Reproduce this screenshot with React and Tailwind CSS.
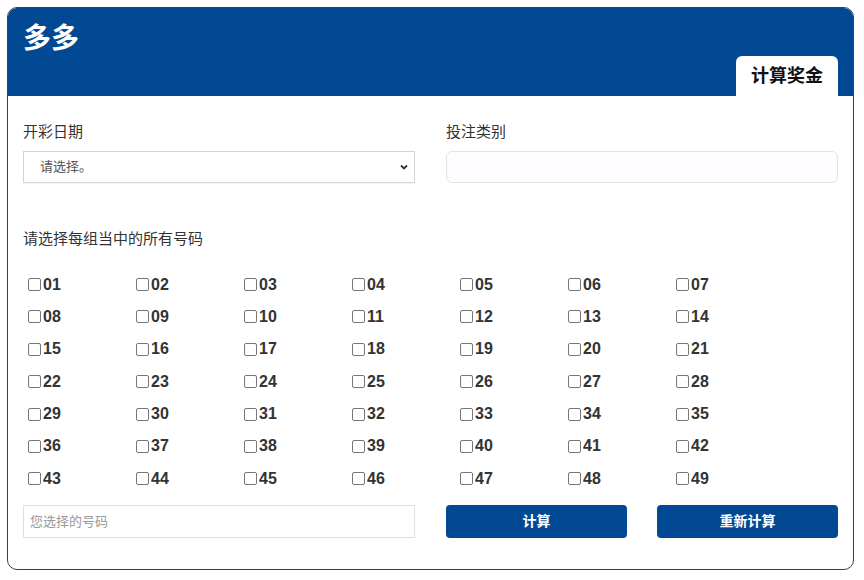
import React from "react";

const nums = Array.from({ length: 49 }, (_, i) => String(i + 1).padStart(2, "0"));

export default function App() {
  return (
    <div className="bg-white w-[864px] h-[580px] p-[7px] font-['Liberation_Sans','Noto_Sans_CJK_SC',sans-serif]">
      <div className="w-[847px] h-[563px] border border-[#3a3f4a] rounded-[10px] overflow-hidden bg-white">
        {/* header */}
        <div className="h-[88px] bg-[#014a93] flex justify-between items-end pl-[15px] pr-[15px]">
          <h1 className="self-start mt-[13px] text-[28px] leading-[36px] font-bold text-white">多多</h1>
          <div className="w-[102px] h-[40px] bg-white rounded-t-[6px] flex items-center justify-center text-[18px] font-bold text-[#111]">
            计算奖金
          </div>
        </div>

        <div className="px-[15px] pt-[25px]">
          <div className="grid grid-cols-2 gap-x-[31px]">
            <div>
              <div className="text-[15px] leading-[22px] text-[#333] mb-[8px]">开彩日期</div>
              <div className="h-[32px] border border-[#d4d4d8] shadow-[0_1px_1px_rgba(0,0,0,0.04)] flex items-center justify-between pl-[16px] pr-[4px] text-[13px] text-[#555]">
                <span>请选择。</span>
                <svg width="12" height="12" viewBox="0 0 12 12" fill="none" stroke="#333" strokeWidth="1.8">
                  <path d="M3 4.5l3 3 3-3" />
                </svg>
              </div>
            </div>
            <div>
              <div className="text-[15px] leading-[22px] text-[#333] mb-[8px]">投注类别</div>
              <div className="h-[32px] border border-[#e2e2e6] rounded-[6px] bg-[#fdfcfe]"></div>
            </div>
          </div>

          <div className="mt-[45px] text-[15px] leading-[22px] text-[#333]">请选择每组当中的所有号码</div>

          <div className="mt-[24px] grid grid-cols-[repeat(7,108px)] gap-y-[11.4px]">
            {nums.map((n) => (
              <label key={n} className="flex items-center h-[21px] text-[16px] font-bold text-[#333]">
                <span className="ml-[5px] mr-[2px] w-[13px] h-[13px] border border-[#777] rounded-[2px] bg-white"></span>
                {n}
              </label>
            ))}
          </div>

          <div className="mt-[16px] grid grid-cols-2 gap-x-[31px]">
            <div className="h-[33px] border border-[#e0e0e4] flex items-center px-[6px] text-[13px] text-[#999]">
              您选择的号码
            </div>
            <div className="grid grid-cols-2 gap-x-[30px]">
              <button className="h-[33px] bg-[#014a93] rounded-[4px] text-white text-[14px] font-bold">计算</button>
              <button className="h-[33px] bg-[#014a93] rounded-[4px] text-white text-[14px] font-bold">重新计算</button>
            </div>
          </div>
        </div>
      </div>
    </div>
  );
}
